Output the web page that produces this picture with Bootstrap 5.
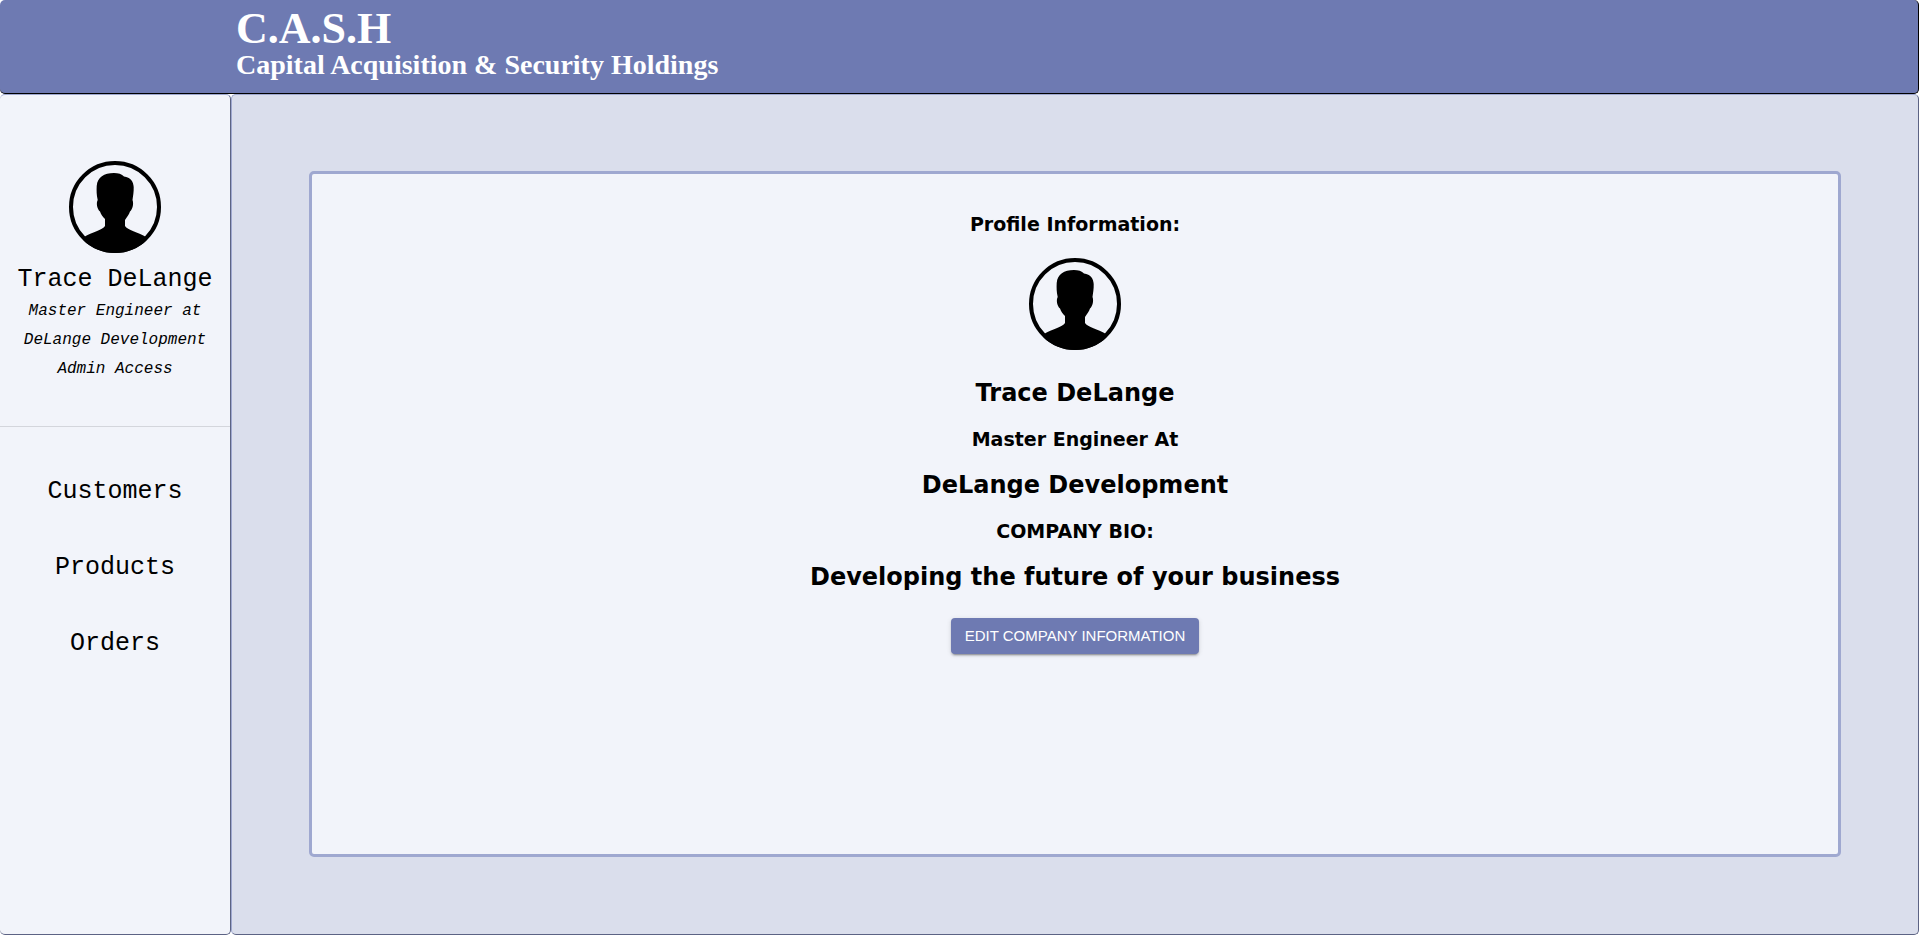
<!DOCTYPE html>
<html lang="en">
<head>
<meta charset="utf-8">
<meta name="viewport" content="width=device-width, initial-scale=1">
<title>C.A.S.H</title>
<link href="https://cdn.jsdelivr.net/npm/bootstrap@5.3.0/dist/css/bootstrap.min.css" rel="stylesheet">
<style>
  body { color: #000; background: #fff; font-family: "DejaVu Sans", Verdana, sans-serif; }
  .brand-bar { background: #6e7ab2; border: solid #000; border-width: 0 1px 1px 0; border-radius: 5px; padding: 7px 0 14px 236px; color: #fff; font-family: "Liberation Serif", Georgia, serif; }
  .brand-title { font-size: 44px; line-height: 44px; font-weight: 700; }
  .brand-sub { font-size: 28px; line-height: 28px; font-weight: 700; }
  .page-body { padding-bottom: 8px; }
  .pane { border: 1px solid #5c6384; border-top-color: #9fa8d0; border-radius: 5px; }
  .side-pane { width: 231px; border-left-width: 0; background: #f2f4fa; font-family: "Liberation Mono", "Courier New", monospace; }
  .side-user { padding: 66px 0 42px; border-bottom: 1px solid #d4d6dc; }
  .side-name, .side-link { font-size: 25px; line-height: 34px; }
  .side-name { margin-top: 10px; }
  .side-note { font-size: 16px; line-height: 29px; font-style: italic; }
  .side-nav { padding-top: 48px; gap: 42px; }
  .side-link { color: #000; text-decoration: none; }
  .main-pane { background: #dadeec; border-left-color: #9fa8d0; padding: 76px 77px 77px; }
  .profile-card { background: #f2f4fa; border: 3px solid #9fa8d0; border-radius: 5px; padding: 35px 16px; }
  .line-sm { font-size: 19px; line-height: 30px; font-weight: 700; margin: 0; }
  .line-lg { font-size: 24px; line-height: 30px; font-weight: 700; margin: 0; }
  .profile-lines { gap: 16px; }
  .profile-avatar { margin: 3px 0 12px; }
  .edit-btn { background: #6e7ab2; color: #fff; border: 0; border-radius: 4px; font-family: "Liberation Sans", Arial, sans-serif; font-size: 15px; line-height: 24px; margin-top: 10px; padding: 6px 14px; box-shadow: 0 3px 1px -2px rgba(0,0,0,.2), 0 2px 2px rgba(0,0,0,.14), 0 1px 5px rgba(0,0,0,.12); }
  .edit-btn:hover { background: #5c689f; color: #fff; }
</style>
</head>
<body class="d-flex flex-column min-vh-100">
<svg width="0" height="0" class="position-absolute" aria-hidden="true">
  <symbol id="avatar" viewBox="0 0 92 92">
    <clipPath id="disc"><circle cx="46" cy="46" r="46"/></clipPath>
    <circle cx="46" cy="46" r="44" fill="none" stroke="#000" stroke-width="4"/>
    <path clip-path="url(#disc)" d="M36 65V58C34 56 32 53.500 31 50.500C28 48 27 42 28.700 39C27.500 34 27.500 29 27.700 25C28.500 16 35 12 45 12C49 12 53 13 55 15.500C61.500 16 64.500 21 64.700 26C64.900 31 64 35 63.500 39C64.800 42 64 48 61 50.500C60 53.500 58 56 56 59V65C58.500 69 69 71 77 76L80 92H12L15 76C23 71 33.500 69 36 65Z"/>
  </symbol>
</svg>
<header class="brand-bar">
  <h1 class="brand-title mb-0">C.A.S.H</h1>
  <h2 class="brand-sub mb-0">Capital Acquisition &amp; Security Holdings</h2>
</header>
<div class="page-body d-flex flex-grow-1">
  <aside class="pane side-pane flex-shrink-0 text-center">
    <div class="side-user">
      <svg width="92" height="92" role="img" aria-label="User avatar"><use href="#avatar"/></svg>
      <div class="side-name">Trace DeLange</div>
      <div class="side-note">Master Engineer at</div>
      <div class="side-note">DeLange Development</div>
      <div class="side-note">Admin Access</div>
    </div>
    <nav class="side-nav d-flex flex-column align-items-center">
      <a class="side-link" href="#">Customers</a>
      <a class="side-link" href="#">Products</a>
      <a class="side-link" href="#">Orders</a>
    </nav>
  </aside>
  <main class="pane main-pane d-flex flex-grow-1">
    <section class="profile-card flex-grow-1 text-center">
      <div class="profile-lines d-flex flex-column align-items-center">
        <h3 class="line-sm">Profile Information:</h3>
        <svg class="profile-avatar" width="92" height="92" role="img" aria-label="Profile avatar"><use href="#avatar"/></svg>
        <h2 class="line-lg">Trace DeLange</h2>
        <h3 class="line-sm">Master Engineer At</h3>
        <h2 class="line-lg">DeLange Development</h2>
        <h3 class="line-sm">COMPANY BIO:</h3>
        <h2 class="line-lg">Developing the future of your business</h2>
        <button type="button" class="btn edit-btn">EDIT COMPANY INFORMATION</button>
      </div>
    </section>
  </main>
</div>
<script src="https://cdn.jsdelivr.net/npm/bootstrap@5.3.0/dist/js/bootstrap.bundle.min.js"></script>
</body>
</html>
